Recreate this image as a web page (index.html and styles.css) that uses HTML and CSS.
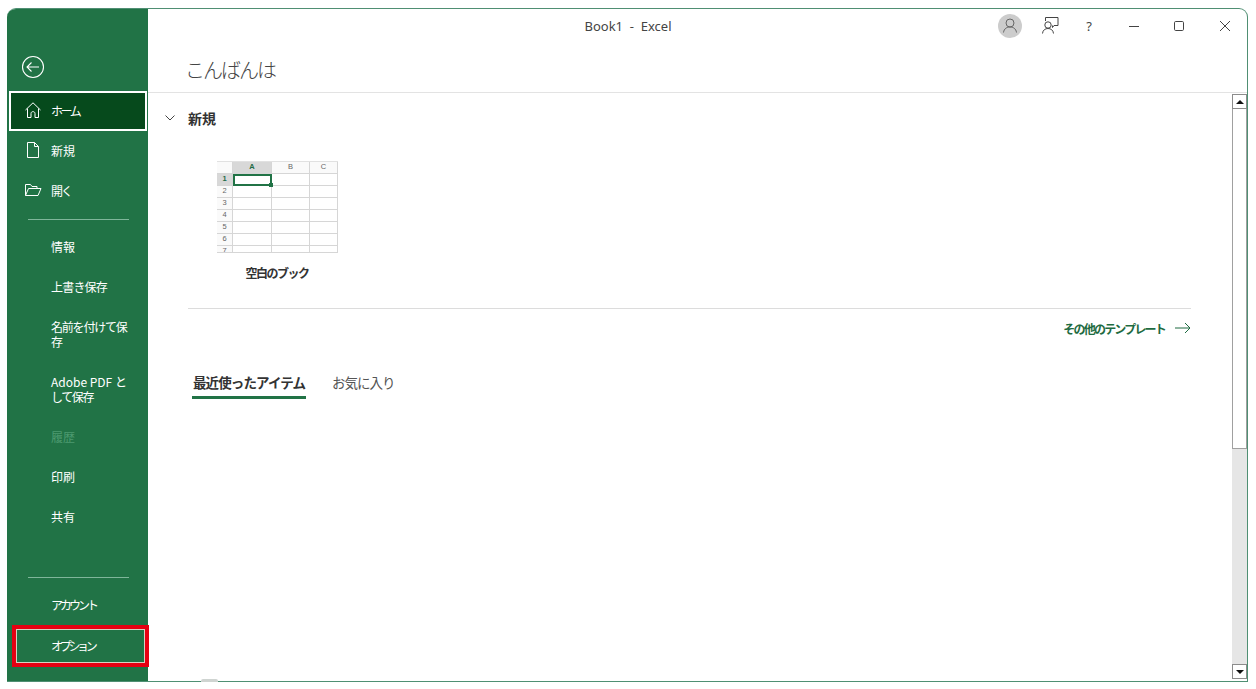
FILE: index.html
```html
<!DOCTYPE html>
<html lang="ja">
<head>
<meta charset="utf-8">
<title>Book1 - Excel</title>
<link rel="stylesheet" href="styles.css">
</head>
<body>
<div class="window">
  <aside class="sidebar">
    <div class="back">
      <svg width="24" height="24" viewBox="0 0 24 24" fill="none" stroke="#fff" stroke-width="1.1"><circle cx="12" cy="12" r="10.500"/><path d="M6 12H18M10.500 7.500L6 12l4.500 4.500"/></svg>
    </div>
    <nav class="nav">
      <a class="item active"><svg class="ico" width="18" height="18" viewBox="0 0 18 18" fill="none" stroke="#fff" stroke-width="1"><path d="M1.500 9L9 1.800 16.500 9M3.500 7.500v9h3.500v-4c0-2.500 4-2.500 4 0v4h3.500v-9"/></svg><span class="ls-kana">ホーム</span></a>
      <a class="item"><svg class="ico" width="18" height="18" viewBox="0 0 18 18" fill="none" stroke="#fff" stroke-width="1"><path d="M3.500 1.500h7l4 4v11h-11zM10.500 1.500v4h4"/></svg><span>新規</span></a>
      <a class="item"><svg class="ico" width="18" height="18" viewBox="0 0 18 18" fill="none" stroke="#fff" stroke-width="1"><path d="M1.500 14.500v-11h5l1.500 2h5v2M1.500 14.500l3-7h12.500l-3 7z"/></svg><span class="ls-open">開く</span></a>
      <div class="rule first"></div>
      <a class="item"><span>情報</span></a>
      <a class="item"><span class="ls-mix">上書き保存</span></a>
      <a class="item tall"><span class="ls-name">名前を付けて保存</span></a>
      <a class="item tall"><span>Adobe PDF と<span class="ls-tail">して保存</span></span></a>
      <a class="item off"><span>履歴</span></a>
      <a class="item"><span>印刷</span></a>
      <a class="item"><span>共有</span></a>
    </nav>
    <div class="foot">
      <div class="rule"></div>
      <a class="item"><span class="ls-narrow">アカウント</span></a>
      <a class="item option"><span class="ls-option">オプション</span></a>
    </div>
  </aside>
  <div class="main">
    <header class="titlebar">
      <div class="doc">Book1 &nbsp;-&nbsp; Excel</div>
      <div class="controls">
        <span class="avatar"><svg width="24" height="24" viewBox="0 0 24 24" fill="none" stroke="#666" stroke-width="1"><circle cx="12" cy="9" r="4"/><path d="M5.500 18.500c.5-4 3.500-5.500 6.500-5.500s6 1.500 6.500 5.500"/></svg></span>
        <svg class="feedback" width="20" height="20" viewBox="0 0 20 20" fill="none" stroke="#444" stroke-width="1"><path d="M5.500 5V1.500h12.500v8h-4l-1.500 2v-2"/><circle cx="8" cy="9" r="3.200"/><path d="M2.500 17.500c.3-3.500 2.800-5 5.500-5s5.200 1.500 5.500 5"/></svg>
        <span class="help">?</span>
        <svg class="min" width="12" height="12" viewBox="0 0 12 12" stroke="#444"><path d="M1 6.500h10"/></svg>
        <svg class="max" width="12" height="12" viewBox="0 0 12 12" fill="none" stroke="#444"><rect x="1.500" y="1.500" width="9" height="9" rx="1.200"/></svg>
        <svg class="close" width="12" height="12" viewBox="0 0 12 12" stroke="#444"><path d="M1 1l10 10M11 1L1 11"/></svg>
      </div>
    </header>
    <div class="greeting">こんばんは</div>
    <div class="below">
      <div class="content">
        <div class="section-head">
          <svg width="10" height="6" viewBox="0 0 10 6" fill="none" stroke="#444"><path d="M.5.500L5 5 9.500.500"/></svg>
          <h2>新規</h2>
        </div>
        <div class="tile">
          <div class="sheet">
            <div class="cell corner"></div><div class="cell col sel">A</div><div class="cell col">B</div><div class="cell col">C</div>
            <div class="cell row sel">1</div><div class="cell cur"></div><div class="cell"></div><div class="cell"></div>
            <div class="cell row">2</div><div class="cell"></div><div class="cell"></div><div class="cell"></div>
            <div class="cell row">3</div><div class="cell"></div><div class="cell"></div><div class="cell"></div>
            <div class="cell row">4</div><div class="cell"></div><div class="cell"></div><div class="cell"></div>
            <div class="cell row">5</div><div class="cell"></div><div class="cell"></div><div class="cell"></div>
            <div class="cell row">6</div><div class="cell"></div><div class="cell"></div><div class="cell"></div>
            <div class="cell row">7</div><div class="cell"></div><div class="cell"></div><div class="cell"></div>
          </div>
          <div class="tile-label">空白のブック</div>
        </div>
        <div class="hr"></div>
        <div class="more">
          <span>その他のテンプレート</span>
          <svg width="16" height="12" viewBox="0 0 16 12" fill="none" stroke="#1e6b41"><path d="M0 6h15M10 1l5 5-5 5"/></svg>
        </div>
        <div class="tabs">
          <span class="tab current">最近使ったアイテム</span>
          <span class="tab">お気に入り</span>
        </div>
      </div>
      <div class="scrollbar">
        <div class="sb-btn"><i class="up"></i></div>
        <div class="sb-thumb"></div>
        <div class="sb-track"></div>
        <div class="sb-btn"><i class="down"></i></div>
      </div>
    </div>
  </div>
</div>
<div class="peek"></div>
</body>
</html>
```
FILE: styles.css
```css
* { box-sizing: border-box; }
html, body { margin: 0; height: 100%; background: #fff; }
body {
  padding: 8px 8px 7px 7px;
  font-family: "Noto Sans CJK JP", "Noto Sans", sans-serif;
  overflow: hidden;
  position: relative;
}
.window {
  display: flex;
  height: 674px;
  border: 1px solid #4f8f73;
  border-left: 0;
  border-radius: 9px 9px 0 0;
  overflow: hidden;
  background: #fff;
}
.sidebar {
  width: 141px;
  flex: none;
  background: #217346;
  color: #fff;
  display: flex;
  flex-direction: column;
  padding-left: 2px;
}
.back { height: 82px; padding: 46px 0 0 12px; flex: none; }
.back svg { display: block; }
.nav { display: flex; flex-direction: column; }
.item {
  display: flex;
  align-items: center;
  height: 40px;
  width: 138px;
  padding: 0 16px 2px 42px;
  font-size: 12px;
  line-height: 15px;
  position: relative;
  color: #fff;
}
.item .ico { position: absolute; left: 15px; top: 10px; }
.item.active { background: #064a1c; outline: 2px solid #fff; outline-offset: -2px; }
.item.tall { height: 55px; }
.item.off { color: #4d9a70; }
.ls-kana { letter-spacing: -2.400px; }
.ls-open { letter-spacing: -2px; }
.ls-mix { letter-spacing: -.8px; }
.ls-name { letter-spacing: -1.200px; }
.ls-tail { letter-spacing: -1.400px; }
.ls-narrow { letter-spacing: -3px; }
.ls-option { letter-spacing: -3.300px; }
.rule { height: 1px; background: #7fb69a; margin: 0 20px 0 19px; width: 101px; }
.rule.first { margin-top: 8px; margin-bottom: 7px; }
.foot { margin-top: auto; padding-bottom: 18px; }
.foot .rule { margin-bottom: 7px; }
.item.option {
  margin: 4px 0 0 7px;
  padding-left: 34px;
  height: 34px;
  width: 129px;
  z-index: 2;
  border: 1px solid #d8cfc0;
  padding-bottom: 1px;
  outline: 4px solid #e60012;
}
.main { flex: 1; min-width: 0; display: flex; flex-direction: column; }
.titlebar {
  height: 35px;
  flex: none;
  display: flex;
  position: relative;
  justify-content: flex-end;
}
.doc {
  position: absolute;
  left: 0;
  width: 960px;
  text-align: center;
  top: 8px;
  font-size: 13px;
  line-height: 18px;
  color: #444;
  font-family: "Noto Sans", sans-serif;
}
.controls { display: flex; align-items: center; padding: 0 16px 2px 0; height: 35px; }
.avatar {
  width: 24px; height: 24px; border-radius: 50%; background: #ccc;
  display: block;
  margin-left: 0;
}
.avatar svg { display: block; }
.feedback { margin-left: 18px; }
.help { width: 12px; margin-left: 23px; font-size: 13px; color: #444; text-align: center; font-family: "Noto Sans", sans-serif; }
.min { margin-left: 33px; }
.max { margin-left: 33px; }
.close { margin-left: 34px; }
.greeting {
  height: 49px;
  flex: none;
  padding: 11px 0 0 37px;
  font-size: 20px;
  line-height: 30px;
  letter-spacing: -2px;
  color: #444;
  font-weight: 300;
  border-bottom: 1px solid #e3e3e3;
}
.below { flex: 1; min-height: 0; display: flex; }
.content { flex: 1; min-width: 0; padding: 0 40px 0 17px; }
.section-head { display: flex; align-items: center; height: 50px; gap: 13px; }
.section-head h2 { margin: 0; font-size: 14px; font-weight: 700; color: #333; }
.tile { width: 121px; margin-left: 52px; margin-top: 18px; }
.sheet {
  display: grid;
  grid-template-columns: 16px 39px 38px 28px;
  grid-auto-rows: 12px;
  height: 92px;
  overflow: hidden;
  border-top: 1px solid #e1e1e1;
  border-bottom: 1px solid #d6d6d6;
}
.cell {
  border-right: 1px solid #d6d6d6;
  border-bottom: 1px solid #d6d6d6;
  font-size: 7.500px;
  line-height: 10px;
  text-align: center;
  color: #666;
  font-family: "Liberation Sans", sans-serif;
}
.cell.col, .cell.corner, .cell.row { background: #fafafa; }
.cell.sel { background: #d8d8d8; color: #1f6b45; font-weight: 700; }
.cell.cur { border: 2px solid #217346; position: relative; }
.cell.cur::after { content: ""; position: absolute; right: -3px; bottom: -3px; width: 4px; height: 4px; background: #217346; }
.tile-label { width: 120px; margin-top: 11px; text-align: center; font-size: 12px; line-height: 18px; font-weight: 700; color: #333; letter-spacing: -1.500px; }
.hr { height: 1px; background: #dcdcdc; margin: 26px 0 0 23px; width: 1003px; }
.more {
  display: flex; justify-content: flex-end; align-items: center; gap: 10px;
  width: 1026px; margin-top: 9px; height: 20px;
  font-size: 12px; font-weight: 700; color: #1e6b41; letter-spacing: -1.800px;
}
.tabs { display: flex; gap: 25px; margin: 34px 0 0 27px; }
.tab { font-size: 13.500px; line-height: 20px; color: #555; padding: 0 1px 4px; letter-spacing: -1px; }
.tab.current { font-weight: 700; color: #333; border-bottom: 3px solid #217346; letter-spacing: -.9px; }
.scrollbar { width: 15px; flex: none; margin: 1px 0 2px; display: flex; flex-direction: column; }
.sb-btn { height: 15px; flex: none; background: #fff; border: 1px solid #8c8c8c; display: flex; align-items: center; justify-content: center; }
.sb-btn i { width: 0; height: 0; border-left: 4px solid transparent; border-right: 4px solid transparent; }
.sb-btn .up { border-bottom: 4px solid #111; }
.sb-btn .down { border-top: 4px solid #111; }
.sb-thumb { height: 340px; flex: none; background: #fff; border: 1px solid #a0a0a0; border-top: 0; }
.sb-track { flex: 1; background: #e6e6e6; }
.peek { position: absolute; left: 201px; top: 679px; width: 17px; height: 3px; background: #cfd4d1; border-radius: 2px 2px 0 0; }
```
